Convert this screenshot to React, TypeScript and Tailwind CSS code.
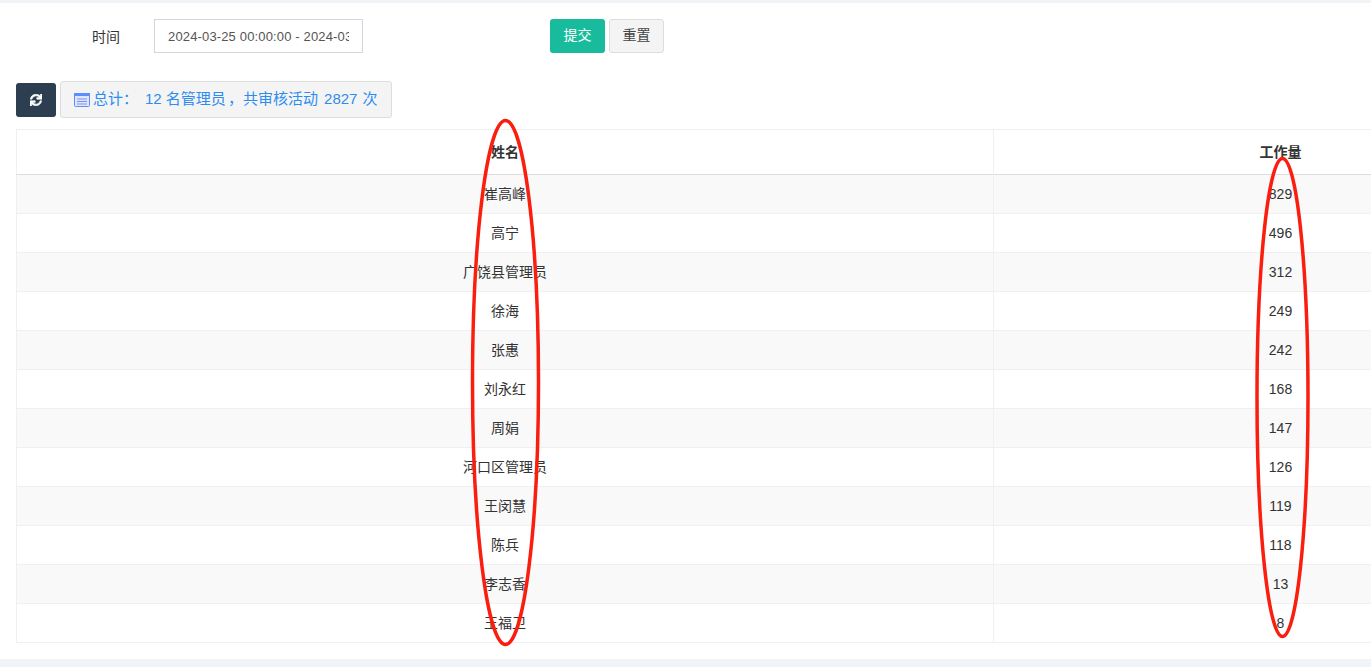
import { FaSync } from 'react-icons/fa';

const rows = [
  ['崔高峰', '829'],
  ['高宁', '496'],
  ['广饶县管理员', '312'],
  ['徐海', '249'],
  ['张惠', '242'],
  ['刘永红', '168'],
  ['周娟', '147'],
  ['河口区管理员', '126'],
  ['王闵慧', '119'],
  ['陈兵', '118'],
  ['李志香', '13'],
  ['王福卫', '8'],
];

export default function App() {
  return (
    <div className="relative h-[667px] w-[1371px] overflow-hidden bg-[#f1f4f6] pt-[3px] font-['Liberation_Sans','Noto_Sans_CJK_SC',sans-serif] text-[14px] text-[#333]">
      <div className="h-[656px] bg-white px-4 pt-4">
        {/* FILTER FORM */}
        <div className="flex h-[34px] items-center">
          <label className="w-[138px] pt-[2px] pl-[76px]">时间</label>
          <input
            readOnly
            value="2024-03-25 00:00:00 - 2024-03-31 23:59:59"
            className="h-[34px] w-[209px] border border-[#d2d6de] bg-white px-[13px] text-[13px] tracking-[0.15px] text-[#555] outline-none"
          />
          <button className="ml-[187px] h-[34px] w-[55px] rounded-[3px] bg-[#18bc9c] pb-[2px] text-white">提交</button>
          <button className="ml-1 h-[34px] w-[55px] rounded-[3px] border border-[#ddd] bg-[#f4f4f4] pb-[2px] text-[#444]">重置</button>
        </div>

        {/* TOOLBAR */}
        <div className="mt-[28px] flex h-[37px] items-center">
          <button className="flex h-[34px] w-10 items-center justify-center rounded-[3px] bg-[#2c3e50] text-white">
            <FaSync className="h-3 w-3" stroke="currentColor" strokeWidth={25} />
          </button>
          <div className="ml-1 flex h-[37px] w-[332px] items-center gap-[3px] rounded-[3px] border border-[#ddd] bg-[#f4f4f4] pl-[13px] text-[15px] whitespace-nowrap text-[#2d8cf0]">
            <svg width="16" height="14" viewBox="0 0 16 14" className="shrink-0">
              <rect x="0.5" y="0.5" width="15" height="13" rx="1" fill="#dfe6ff" stroke="#5b8ff9" />
              <rect x="0" y="0" width="16" height="3" fill="#5b8ff9" />
              <path d="M3 6h10M3 8.5h10M3 11h10" stroke="#7f8ff0" strokeWidth="1" />
            </svg>
            <span>
              总计：<span className="ml-[7px]">12</span> 名管理员<span className="ml-[2px]">，</span>共审核活动 <span className="ml-[2px]">2827</span> <span className="ml-[1px]">次</span>
            </span>
          </div>
        </div>

        {/* TABLE */}
        <table className="mt-[11px] w-[1551px] table-fixed border-collapse border border-[#f0f0f0]">
          <colgroup>
            <col className="w-[977px]" />
            <col className="w-[574px]" />
          </colgroup>
          <thead>
            <tr className="h-[45px] border-b border-b-[#ddd] font-bold">
              <th className="border-r border-[#f0f0f0] text-center">姓名</th>
              <th className="text-center">工作量</th>
            </tr>
          </thead>
          <tbody>
            {rows.map(([name, count], i) => (
              <tr key={name} className={`h-[39px] border-t border-[#f0f0f0] ${i % 2 === 0 ? 'bg-[#f9f9f9]' : 'bg-white'}`}>
                <td className="border-r border-[#f0f0f0] text-center">{name}</td>
                <td className="text-center">{count}</td>
              </tr>
            ))}
          </tbody>
        </table>
      </div>

      {/* hand-drawn red marks over the columns */}
      <svg className="pointer-events-none absolute inset-0" width="1371" height="667" fill="none" stroke="#fa1e0e" strokeWidth="3.5">
        <ellipse cx="505.5" cy="382.5" rx="33" ry="262" />
        <ellipse cx="1282.5" cy="397.5" rx="25.5" ry="239" />
      </svg>
    </div>
  );
}
